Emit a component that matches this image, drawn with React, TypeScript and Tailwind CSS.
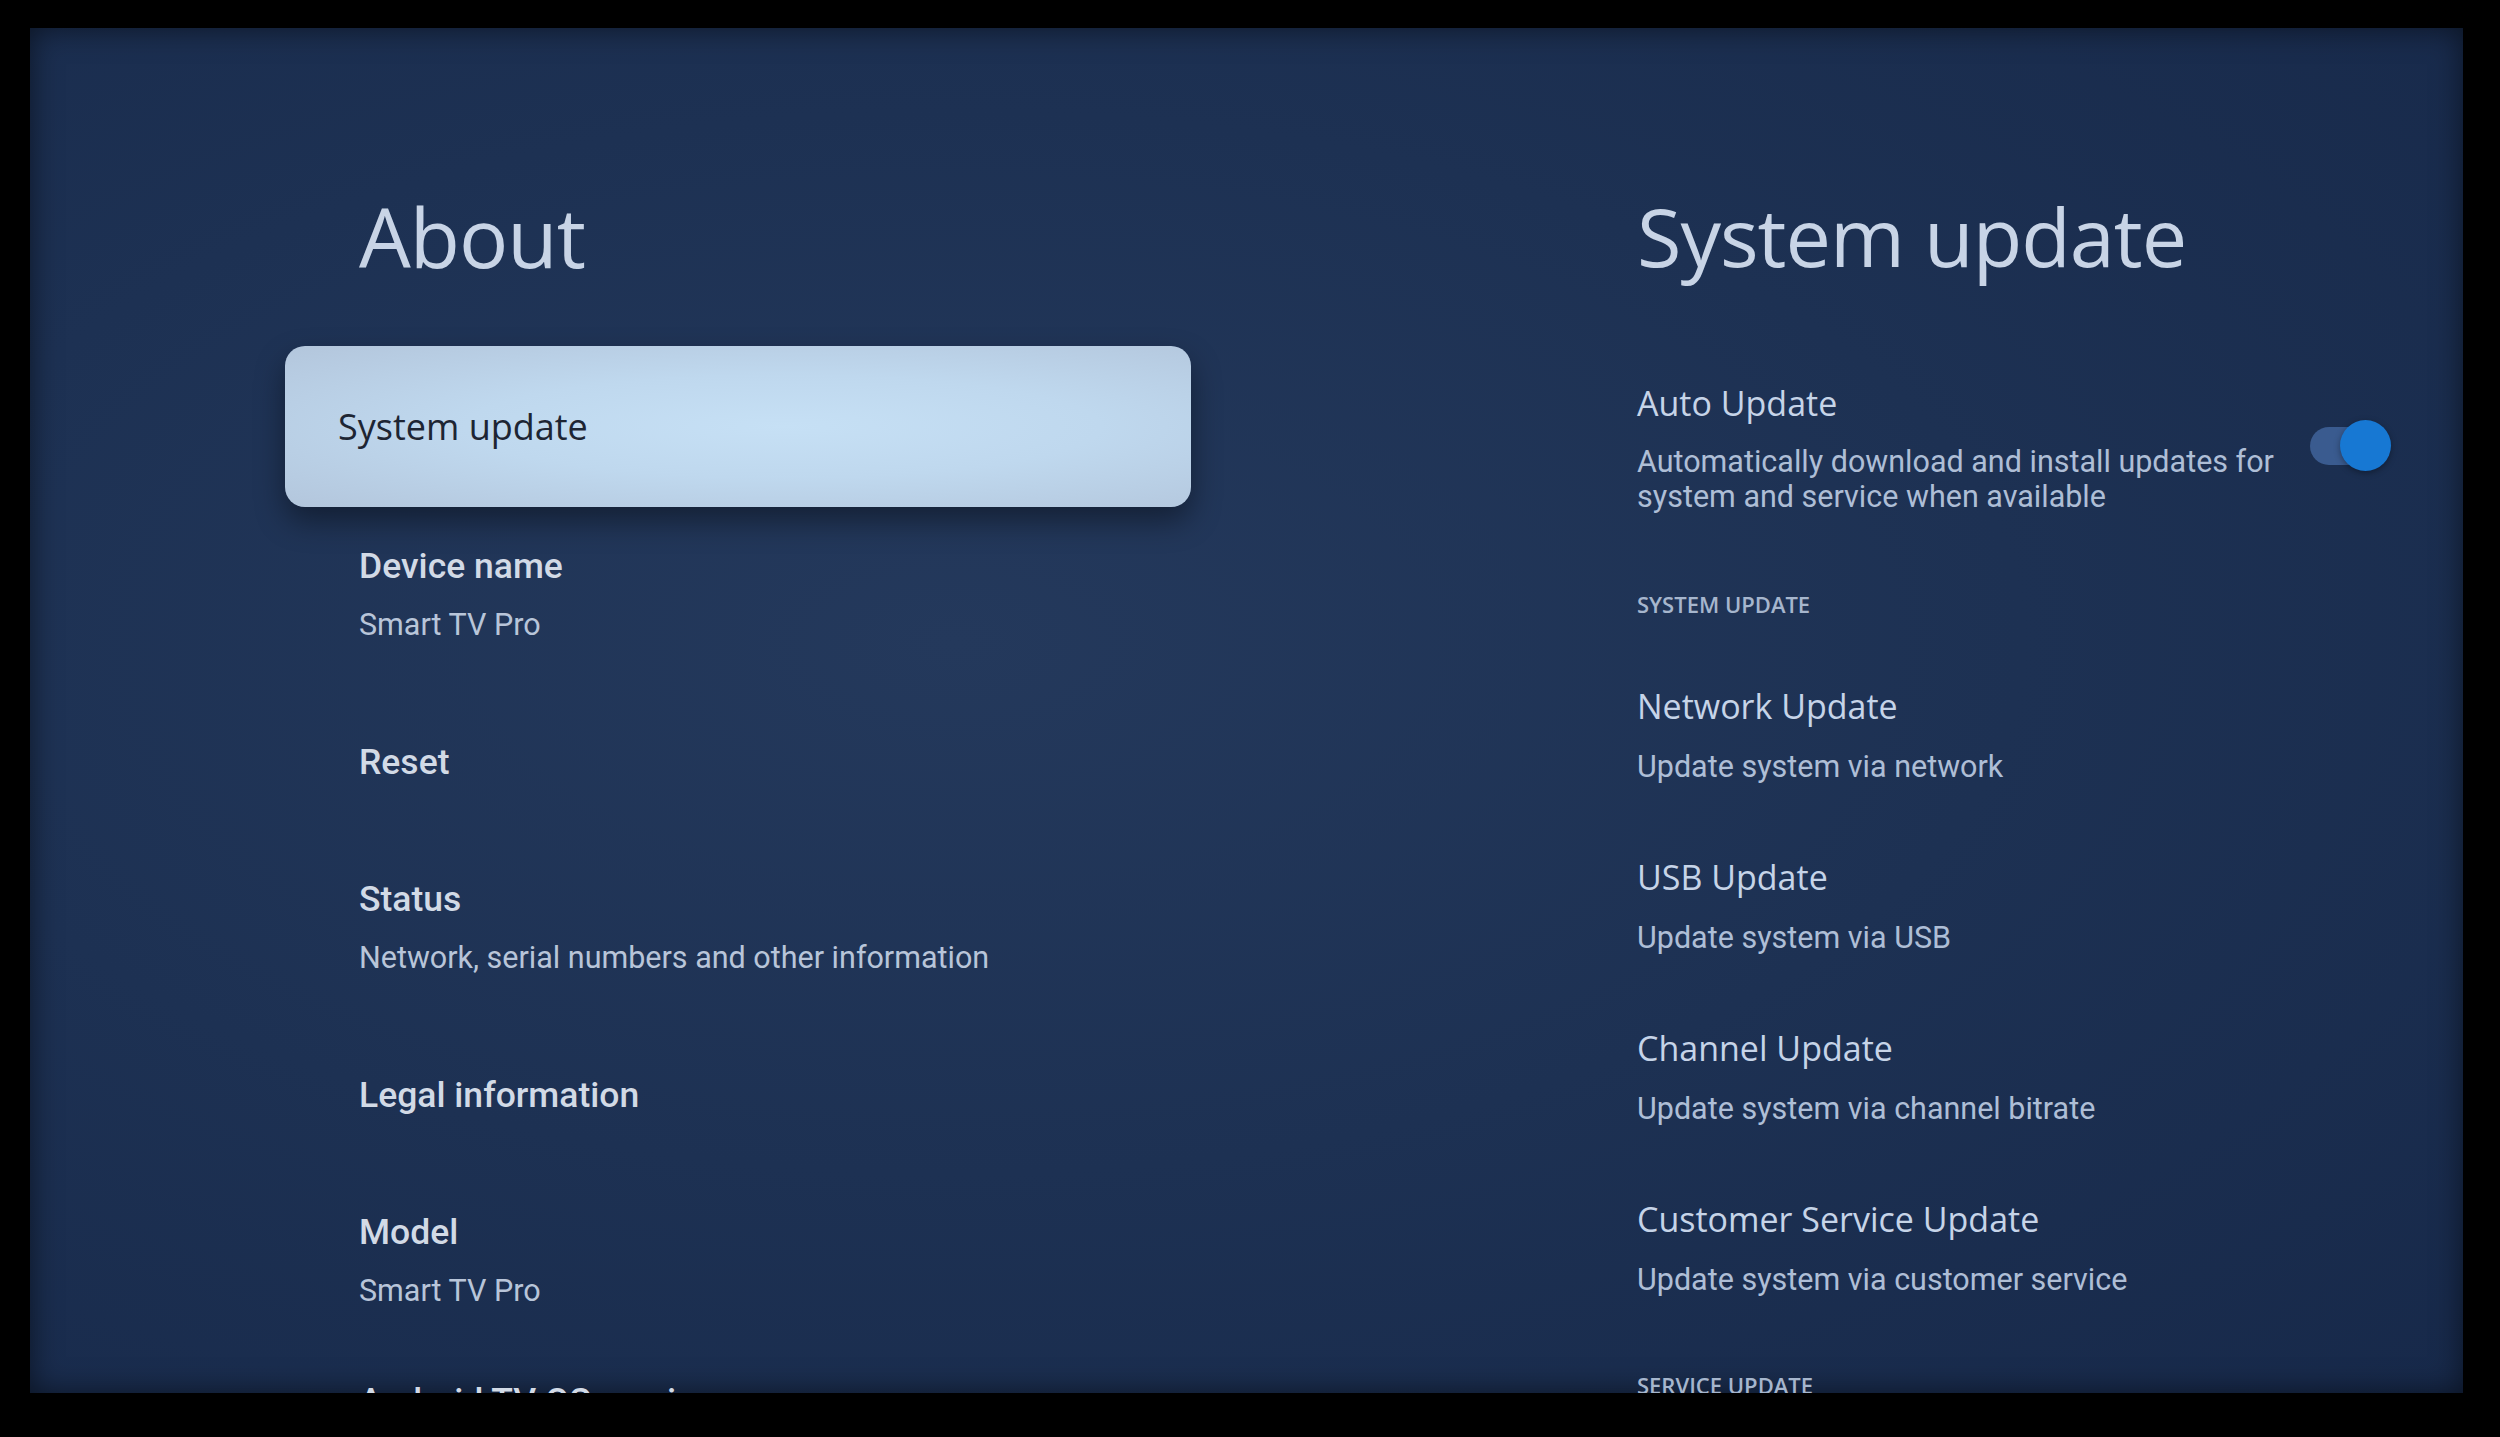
import { ReactNode } from "react";

const sans = "font-['Open_Sans',Roboto,sans-serif]";
const body = "font-['Roboto','Liberation_Sans',sans-serif]";

function LeftItem({ title, sub, className = "" }: { title: string; sub?: string; className?: string }) {
  return (
    <div className={`shrink-0 pl-[74px] flex flex-col gap-[7px] ${className}`}>
      <div className={`${body} text-[35.5px] leading-[52px] font-medium text-[#d2dae6]`}>{title}</div>
      {sub && <div className={`${body} text-[30.5px] leading-[52px] text-[#b8c5d9]`}>{sub}</div>}
    </div>
  );
}

function RightItem({ title, sub }: { title: string; sub: string }) {
  return (
    <div className="shrink-0 flex flex-col gap-[9px]">
      <div className={`${sans} text-[34px] leading-[52px] text-[#c6d4e8]`}>{title}</div>
      <div className={`${body} text-[30.5px] leading-[52px] text-[#aebed6]`}>{sub}</div>
    </div>
  );
}

function Section({ children }: { children: ReactNode }) {
  return (
    <div className={`${sans} text-[22px] leading-[30px] font-semibold uppercase text-[#a6b6cd]`}>
      {children}
    </div>
  );
}

export default function App() {
  return (
    <div className="w-[2500px] h-[1437px] bg-black pt-[28px] pl-[30px]">
      {/* tv screen */}
      <div className="relative w-[2433px] h-[1365px] overflow-hidden bg-[radial-gradient(ellipse_at_38%_45%,#24395c_0%,#1d3153_50%,#17294a_100%)] shadow-[inset_0_0_30px_rgba(0,0,0,0.55)] flex items-start">
        {/* left panel */}
        <div className="ml-[255px] w-[906px] flex flex-col shrink-0">
          <div className="shrink-0 pt-[164px] pl-[74px]">
            <h1 className={`${sans} text-[82px] leading-[88px] text-[#c8d4e6] tracking-[-1px]`}>About</h1>
          </div>

          <div className="shrink-0 mt-[66px] h-[161px] rounded-[20px] pl-[53px] flex items-center bg-[radial-gradient(ellipse_at_55%_50%,#c6e0f5_0%,#bfd8ee_45%,#b3c6dc_100%)] shadow-[0_14px_30px_rgba(0,0,0,0.4)]">
            <span className={`${sans} text-[36px] text-[#1d2533]`}>System update</span>
          </div>

          <div className="shrink-0 mt-[33px] flex flex-col gap-[85px]">
            <LeftItem title="Device name" sub="Smart TV Pro" />
            <LeftItem title="Reset" />
            <LeftItem title="Status" sub="Network, serial numbers and other information" />
            <LeftItem title="Legal information" />
            <LeftItem title="Model" sub="Smart TV Pro" />
            <LeftItem title="Android TV OS version" className="-mt-[27px]" />
          </div>
        </div>

        {/* right panel */}
        <div className="ml-[446px] w-[754px] flex flex-col shrink-0">
          <div className="shrink-0 pt-[164px]">
            <h2 className={`${sans} text-[81px] leading-[88px] text-[#c8d4e6] tracking-[-1px]`}>System update</h2>
          </div>

          <div className="shrink-0 mt-[97px] flex items-center justify-between">
            <div className="flex flex-col gap-[15px]">
              <div className={`${sans} text-[34px] leading-[52px] text-[#c6d4e8]`}>Auto Update</div>
              <div className={`${body} text-[30.5px] leading-[35px] text-[#aebed6]`}>
                Automatically download and install updates for
                <br />
                system and service when available
              </div>
            </div>
            {/* switch */}
            <div className="relative w-[81px] h-[51px] flex items-center">
              <div className="w-[65px] h-[38px] rounded-full bg-[#3a5b8f]" />
              <div className="absolute right-0 top-0 w-[51px] h-[51px] rounded-full bg-[#1778d3] shadow-[0_2px_6px_rgba(0,0,0,0.35)]" />
            </div>
          </div>

          <div className="shrink-0 mt-[75px]">
            <Section>System update</Section>
          </div>

          <div className="shrink-0 mt-[61px] flex flex-col gap-[58px]">
            <RightItem title="Network Update" sub="Update system via network" />
            <RightItem title="USB Update" sub="Update system via USB" />
            <RightItem title="Channel Update" sub="Update system via channel bitrate" />
            <RightItem title="Customer Service Update" sub="Update system via customer service" />
          </div>

          <div className="shrink-0 mt-[64px]">
            <Section>Service update</Section>
          </div>
        </div>
      </div>
    </div>
  );
}
